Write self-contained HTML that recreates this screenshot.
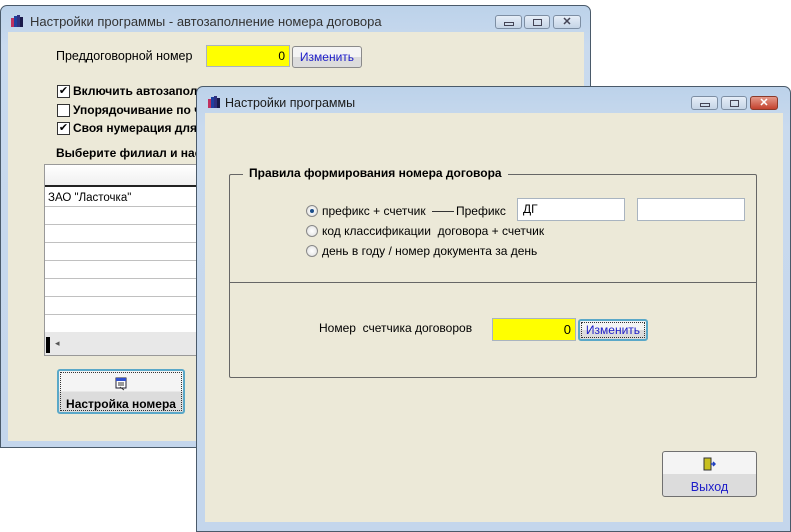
<!DOCTYPE html>
<html><head><meta charset="utf-8"><style>
*{box-sizing:border-box;margin:0;padding:0}
body{width:791px;height:530px;background:#fff;position:relative;overflow:hidden;font-family:"Liberation Sans",sans-serif;font-size:12px;color:#000}
.abs{position:absolute;white-space:nowrap}
.win{position:absolute;background:linear-gradient(#bcd2ea,#c9daee 40px,#c4d6ec);border:1px solid #4a5a6a;border-radius:7px 7px 0 0}
.cont{position:absolute;background:#ece9d8}
.title{position:absolute;font-size:12px;color:#1a1a1a}
.tb{position:absolute;height:14px;border:1px solid #7d8ea3;border-radius:3px;background:linear-gradient(#e6eef8,#c5d4e6)}
.tb.x{background:linear-gradient(#e59a8a,#c4422e);border-color:#8a3a2a}
.inp{position:absolute;border:1px solid #a9b4c0;background:#fff}
.yel{background:#ffff00;text-align:right;padding-right:4px}
.btn{position:absolute;border:1px solid #707070;border-radius:3px;background:linear-gradient(#f4f4f4 50%,#dcdcdc 50%);color:#1c1cc8;text-align:center}
.cb{position:absolute;width:13px;height:13px;border:1px solid #333;background:#fff;font-size:11px;line-height:11px;text-align:center}
.rad{position:absolute;width:12px;height:12px;border-radius:50%;border:1px solid #888;background:radial-gradient(#fff,#ddd)}
.icon{position:absolute;width:14px;height:14px}
</style></head><body>

<div class="win" style="left:0;top:5px;width:591px;height:443px">
 <div class="cont" style="left:7px;top:26px;width:576px;height:409px"></div>
</div>
<svg class="icon" style="left:10px;top:14px" viewBox="0 0 14 14"><rect x="1" y="4" width="3" height="9" fill="#c03060"/><rect x="4" y="2" width="3" height="11" fill="#2040a0"/><rect x="7" y="1" width="3" height="12" fill="#303080"/><rect x="10" y="3" width="3" height="10" fill="#1a1a4a"/></svg>
<div class="title" style="left:30px;top:14px;font-size:13px;color:#333">Настройки программы - автозаполнение номера договора</div>
<div class="tb" style="left:495px;top:15px;width:27px"><div class="abs" style="left:8px;top:6px;width:10px;height:4px;border:1px solid #445"></div></div>
<div class="tb" style="left:524px;top:15px;width:26px"><div class="abs" style="left:8px;top:3px;width:9px;height:7px;border:1px solid #445"></div></div>
<div class="tb" style="left:553px;top:15px;width:28px;color:#445;font-weight:bold;font-size:11px;text-align:center;line-height:12px">✕</div>

<div class="abs" style="left:56px;top:49px;font-size:12.5px">Преддоговорной номер</div>
<div class="inp yel" style="left:206px;top:45px;width:84px;height:22px;line-height:20px">0</div>
<div class="btn" style="left:292px;top:46px;width:70px;height:22px;line-height:20px;border-color:#8a8a8a">Изменить</div>

<div class="cb" style="left:57px;top:85px">✔</div><div class="abs" style="left:73px;top:84px;font-weight:bold">Включить автозаполнение</div>
<div class="cb" style="left:57px;top:104px"></div><div class="abs" style="left:73px;top:103px;font-weight:bold">Упорядочивание по ч</div>
<div class="cb" style="left:57px;top:122px">✔</div><div class="abs" style="left:73px;top:121px;font-weight:bold">Своя нумерация для</div>
<div class="abs" style="left:56px;top:146px;font-weight:bold">Выберите филиал и нас</div>

<div class="abs" style="left:44px;top:164px;width:160px;height:192px;border:1px solid #999;background:#fff">
 <div class="abs" style="left:0;top:0;width:100%;height:22px;background:linear-gradient(#fff,#f0f0f0);border-bottom:2px solid #222"></div>
 <div class="abs" style="left:3px;top:27px;font-size:11.5px">ЗАО "Ласточка"</div>
 <div class="abs" style="left:0;top:41px;width:100%;height:1px;background:#c0c0c0"></div>
 <div class="abs" style="left:0;top:59px;width:100%;height:1px;background:#c0c0c0"></div>
 <div class="abs" style="left:0;top:77px;width:100%;height:1px;background:#c0c0c0"></div>
 <div class="abs" style="left:0;top:95px;width:100%;height:1px;background:#c0c0c0"></div>
 <div class="abs" style="left:0;top:113px;width:100%;height:1px;background:#c0c0c0"></div>
 <div class="abs" style="left:0;top:131px;width:100%;height:1px;background:#c0c0c0"></div>
 <div class="abs" style="left:0;top:149px;width:100%;height:1px;background:#c0c0c0"></div>
 <div class="abs" style="left:0;top:167px;width:100%;height:23px;background:#e8e8e8"></div>
 <div class="abs" style="left:1px;top:172px;width:4px;height:16px;background:#000"></div>
 <div class="abs" style="left:10px;top:173px;font-size:9px;color:#555">◂</div>
</div>

<div class="btn" style="left:57px;top:369px;width:128px;height:45px;border:2px solid #5aa8c8;color:#000;font-weight:bold;padding-top:26px;outline:1px dotted #333;outline-offset:-4px">Настройка номера</div>
<svg class="icon" style="left:114px;top:377px" viewBox="0 0 14 14"><rect x="2" y="1" width="10" height="10" fill="#fff" stroke="#223"/><rect x="2" y="1" width="10" height="3" fill="#3050d0"/><path d="M4 6h6M4 8h6M6 10l4 3" stroke="#333"/></svg>

<div class="win" style="left:196px;top:86px;width:595px;height:446px">
 <div class="cont" style="left:8px;top:26px;width:578px;height:409px"></div>
</div>
<svg class="icon" style="left:207px;top:95px" viewBox="0 0 14 14"><rect x="1" y="4" width="3" height="9" fill="#c03060"/><rect x="4" y="2" width="3" height="11" fill="#2040a0"/><rect x="7" y="1" width="3" height="12" fill="#303080"/><rect x="10" y="3" width="3" height="10" fill="#1a1a4a"/></svg>
<div class="title" style="left:225px;top:96px;font-size:12.5px">Настройки программы</div>
<div class="tb" style="left:691px;top:96px;width:27px"><div class="abs" style="left:8px;top:6px;width:10px;height:4px;border:1px solid #445"></div></div>
<div class="tb" style="left:721px;top:96px;width:26px"><div class="abs" style="left:8px;top:3px;width:9px;height:7px;border:1px solid #445"></div></div>
<div class="tb x" style="left:750px;top:96px;width:28px;color:#fff;font-weight:bold;font-size:11px;text-align:center;line-height:12px">✕</div>

<div class="abs" style="left:229px;top:174px;width:528px;height:204px;border:1px solid #666;border-radius:2px"></div>
<div class="abs" style="left:229px;top:282px;width:528px;height:1px;background:#666"></div>
<div class="abs" style="left:243px;top:166px;background:#ece9d8;padding:0 6px;font-weight:bold;font-size:12px">Правила формирования номера договора</div>

<div class="rad" style="left:306px;top:205px"><div class="abs" style="left:3px;top:3px;width:4px;height:4px;border-radius:50%;background:#1a4e8a"></div></div>
<div class="abs" style="left:322px;top:204px">префикс + счетчик</div>
<div class="abs" style="left:432px;top:211px;width:22px;height:1px;background:#333"></div>
<div class="abs" style="left:456px;top:204px">Префикс</div>
<div class="inp" style="left:517px;top:198px;width:108px;height:23px;padding:3px 5px">ДГ</div>
<div class="inp" style="left:637px;top:198px;width:108px;height:23px"></div>
<div class="rad" style="left:306px;top:225px"></div>
<div class="abs" style="left:322px;top:224px">код классификации&nbsp; договора + счетчик</div>
<div class="rad" style="left:306px;top:245px"></div>
<div class="abs" style="left:322px;top:244px">день в году / номер документа за день</div>

<div class="abs" style="left:319px;top:321px">Номер&nbsp; счетчика договоров</div>
<div class="inp yel" style="left:492px;top:318px;width:84px;height:23px;line-height:21px;font-size:13px">0</div>
<div class="btn" style="left:578px;top:319px;width:70px;height:22px;line-height:18px;border:2px solid #5aa8c8;outline:1px dotted #333;outline-offset:-4px">Изменить</div>

<div class="btn" style="left:662px;top:451px;width:95px;height:46px;padding-top:28px;font-size:12.5px">Выход</div>
<svg class="icon" style="left:702px;top:457px" viewBox="0 0 14 14"><rect x="2" y="1" width="7" height="12" fill="#c8c020" stroke="#333"/><path d="M9 7h4M11 5l2 2-2 2" stroke="#2040c0" stroke-width="1.5" fill="none"/></svg>

</body></html>
